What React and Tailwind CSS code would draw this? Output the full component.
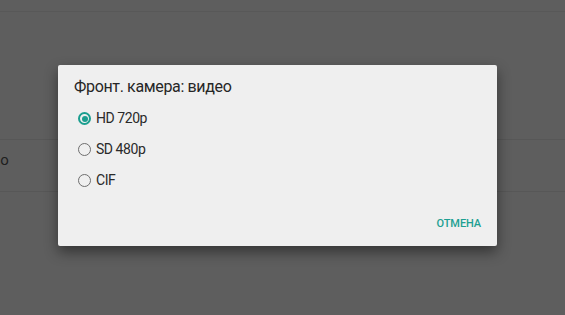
export default function App() {
  const opts = [
    { label: "HD 720p", checked: true },
    { label: "SD 480p", checked: false },
    { label: "CIF", checked: false },
  ];
  return (
    <div
      className="relative w-[565px] h-[315px] overflow-hidden bg-[#5e5e5e]"
      style={{ fontFamily: "Roboto, 'Noto Sans', sans-serif" }}
    >
      <div className="h-[12px] border-b border-[#585858]" />
      <div className="h-[128px] border-b border-[#575757]" />
      <div className="h-[52px] border-b border-[#575757] flex items-center pb-[10px]">
        <span className="ml-[-9px] text-[15px] text-[#1f1f1f]">Bo</span>
      </div>

      <div className="absolute left-[58px] top-[65px] w-[439px] h-[181px] bg-[#efefef] rounded-[2px] shadow-[0_6px_14px_rgba(0,0,0,0.45)] flex flex-col">
        <div className="pt-[10px] pl-[16px] h-[34px] text-[16px] leading-[24px] tracking-[-0.35px] text-[#262626]">
          Фронт. камера: видео
        </div>
        <div className="mt-[4px] flex flex-col">
          {opts.map((o) => (
            <div key={o.label} className="h-[31px] flex items-center pl-[20px]">
              {o.checked ? (
                <span className="w-[13px] h-[13px] rounded-full border-2 border-[#1a9e8f] flex items-center justify-center">
                  <span className="w-[6px] h-[6px] rounded-full bg-[#1a9e8f]" />
                </span>
              ) : (
                <span className="w-[13px] h-[13px] rounded-full border-[1.5px] border-[#6e6e6e]" />
              )}
              <span className="ml-[5px] text-[14px] tracking-[-0.45px] text-[#2a2a2a]">{o.label}</span>
            </div>
          ))}
        </div>
        <div className="mt-[12px] h-[32px] flex items-center justify-end pr-[16px]">
          <span className="text-[11px] font-medium tracking-[-0.1px] text-[#1d9f92]">ОТМЕНА</span>
        </div>
      </div>
    </div>
  );
}
